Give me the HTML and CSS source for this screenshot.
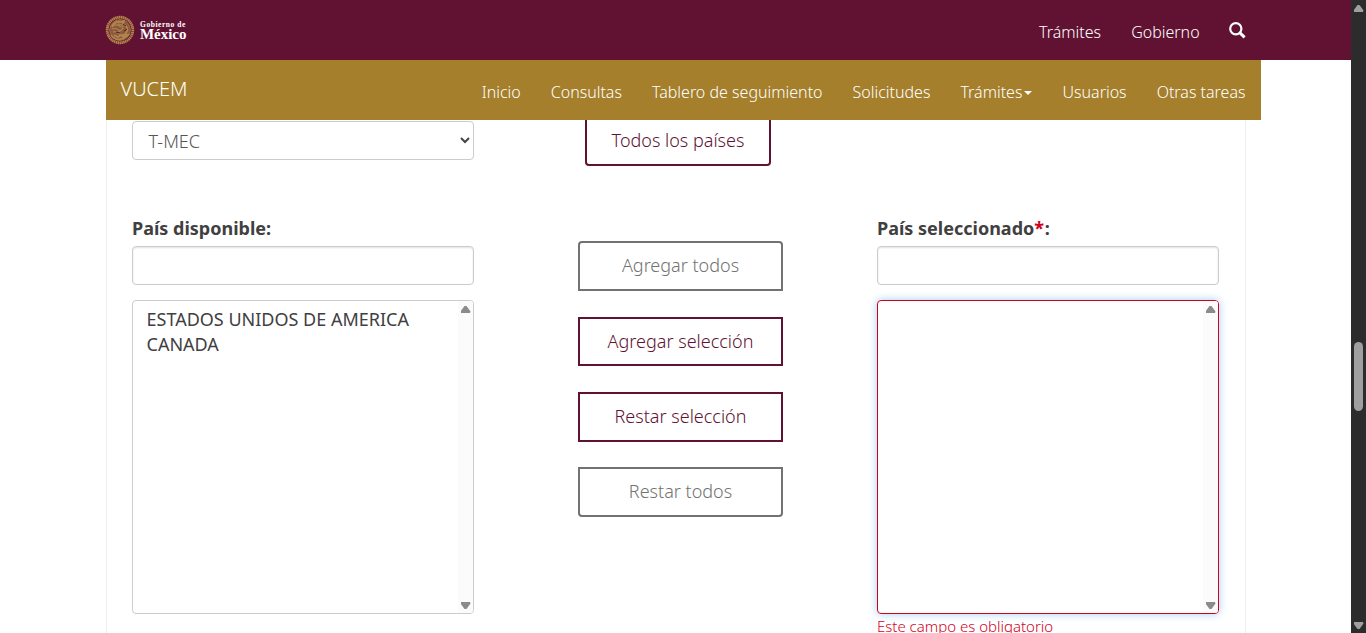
FILE: index.html
```html
<!DOCTYPE html>
<html lang="es">
<head>
<meta charset="utf-8">
<title>VUCEM</title>
<link rel="stylesheet" href="styles.css">
</head>
<body>
<div class="page">
  <header class="gov-bar">
    <a class="gov-logo">
      <svg class="seal" viewBox="0 0 30 30" width="30" height="30" fill="none" stroke="#b2864b">
        <circle cx="15" cy="15" r="12.8" stroke-width="2.8" stroke-dasharray="1.5 .4"/>
        <circle cx="15" cy="15" r="10.4" fill="#8a5940" stroke-width=".7"/>
        <path d="M7 12c1-4 5-6 9-5l3-1-1 3c3 1 5 4 4 7-1 4-5 5-8 4" stroke-width="1.8"/>
        <path d="M8 11c3-2 6-1 8 1M7 14c3-1 6 0 8 2M8 17c3-1 5 0 7 2M13 9c3 0 5 2 5 5M18 13c-1 3-4 3-6 5" stroke-width="1.1"/>
        <path d="M6 20c3 4 7 5 10 4s6-2 8-5M9 20l4 2 3-2 3 2 3-3" stroke-width="1.6"/>
        <path d="M18 9l3 2M19 16l3-2M11 17l4 1" stroke="#611232" stroke-width="1"/>
      </svg>
      <span class="gov-name"><small>Gobierno de</small><strong>México</strong></span>
    </a>
    <nav class="gov-links">
      <a>Trámites</a><a>Gobierno</a>
      <svg class="search" viewBox="0 0 17 17" width="17" height="17" fill="none" stroke="#fff"><circle cx="6.8" cy="6.7" r="5.6" stroke-width="2.2"/><path d="M10.7 10.6l4.9 4.8" stroke-width="2.9"/></svg>
    </nav>
  </header>
  <div class="app-bar">
    <a class="brand">VUCEM</a>
    <nav class="app-links">
      <a>Inicio</a><a>Consultas</a><a>Tablero de seguimiento</a><a>Solicitudes</a><a>Trámites<i class="caret"></i></a><a>Usuarios</a><a>Otras tareas</a>
    </nav>
  </div>
  <main class="content">
    <div class="columns treaty-row">
      <div class="field select"><span>T-MEC</span><svg width="10" height="7" viewBox="0 0 10 7" fill="none" stroke="#444" stroke-width="2"><path d="M1 1l4 4 4-4"/></svg></div>
      <div class="middle"><button class="btn all-countries">Todos los países</button></div>
    </div>
    <div class="columns">
      <section class="picker">
        <label class="label">País disponible:</label>
        <div class="field"></div>
        <div class="list">
          <ul class="options"><li>ESTADOS UNIDOS DE AMERICA</li><li>CANADA</li></ul>
          <div class="track"><i class="arrow up"></i><i class="arrow down"></i></div>
        </div>
      </section>
      <div class="middle actions">
        <button class="btn first disabled">Agregar todos</button>
        <button class="btn add">Agregar selección</button>
        <button class="btn">Restar selección</button>
        <button class="btn last disabled">Restar todos</button>
      </div>
      <section class="picker">
        <label class="label">País seleccionado<span class="required">*</span>:</label>
        <div class="field"></div>
        <div class="list invalid">
          <ul class="options"></ul>
          <div class="track"><i class="arrow up"></i><i class="arrow down"></i></div>
        </div>
        <p class="error">Este campo es obligatorio</p>
      </section>
    </div>
  </main>
</div>
<aside class="page-scroll"><i class="arrow up"></i><i class="thumb"></i><i class="arrow down"></i></aside>
</body>
</html>
```
FILE: styles.css
```css
* { box-sizing: border-box; }
body {
  margin: 0;
  height: 633px;
  display: flex;
  overflow: hidden;
  background: #fff;
  color: #404041;
  font: 300 18px/25px "Noto Sans", sans-serif;
}
.page { width: 1351px; height: 633px; overflow: hidden; display: flex; flex-direction: column; }
.gov-bar {
  height: 60px;
  flex: none;
  padding: 0 105px 0 105px;
  display: flex;
  justify-content: space-between;
  align-items: center;
  background: #611232;
  color: #fff;
}
.gov-logo { display: flex; align-items: center; gap: 5px; }
.gov-name { display: flex; flex-direction: column; font-family: "Liberation Serif", serif; padding-bottom: 2px; }
.gov-name small { font-size: 7.5px; line-height: 9px; letter-spacing: .55px; font-weight: 700; }
.gov-name strong { font-size: 15px; line-height: 10px; letter-spacing: -.05px; font-weight: 700; }
.gov-links { display: flex; gap: 30px; font-size: 16px; padding-top: 4px; }
.search { margin: 2px 0 0 -.6px; }
.app-bar {
  width: 1155px;
  height: 60px;
  flex: none;
  margin-left: 106px;
  padding: 4px 15.5px 0 14.5px;
  display: flex;
  justify-content: space-between;
  align-items: center;
  background: #a57f2c;
  color: #fff;
}
.brand { font-size: 20px; padding-bottom: 8px; }
.app-links { display: flex; gap: 30px; font-size: 16px; }
.caret { display: inline-block; margin-left: 2px; vertical-align: middle; border: 4px solid transparent; border-top-color: #fff; border-bottom: 0; }
.content {
  flex: 1;
  width: 1140px;
  margin-left: 106px;
  padding-left: 25px;
  border: solid #eee;
  border-width: 0 1px;
  overflow: hidden;
}
.columns { display: grid; grid-template-columns: 342px 403px 342px; align-items: start; }
.treaty-row { height: 96px; padding-top: 1px; }
.middle { padding-left: 104px; }
.field {
  height: 39px;
  border: 1px solid #ccc;
  border-radius: 4px;
  box-shadow: inset 0 1px 2px rgba(0, 0, 0, .12);
}
.select { display: flex; align-items: center; justify-content: space-between; padding: 0 3px 0 15.5px; color: #555; box-shadow: none; }
.select span { padding-top: 2px; }
.label { display: block; height: 30px; font-weight: 700; line-height: 25px; }
.required { color: #d0021b; margin-right: .6px; }
.list { height: 314px; margin-top: 15px; border: 1px solid #ccc; border-radius: 4px; display: flex; overflow: hidden; }
.list.invalid { border-color: #d0021b; box-shadow: 0 0 8px rgba(102, 175, 233, .6); }
.options { flex: 1; margin: 0; padding: 6px 0 0 13.5px; list-style: none; font-weight: 400; }
.track { width: 15px; padding: 5px 0 4px; display: flex; flex-direction: column; justify-content: space-between; align-items: center; background: #fbfbfb; }
.arrow { width: 10px; height: 7px; background: #8b8b8b; }
.up { clip-path: polygon(40% 0, 60% 0, 100% 80%, 95% 100%, 5% 100%, 0 80%); }
.down { clip-path: polygon(5% 0, 95% 0, 100% 20%, 60% 100%, 40% 100%, 0 20%); }
.actions { padding-top: 25px; display: flex; flex-direction: column; gap: 26px; }
.btn {
  display: block;
  width: 205px;
  height: 50px;
  padding: 0 0 2px;
  border: 2px solid #611232;
  background: #fff;
  color: #611232;
  font: inherit;
}
.btn.add { height: 49px; padding: 0; }
.btn.disabled { color: #727272; border-color: #727272; }
.btn.first { border-radius: 4px 4px 0 0; }
.btn.last { border-radius: 0 0 4px 4px; margin-top: -1px; }
.all-countries { width: 186px; margin: -5px 0 0 7px; border-radius: 4px; }
.error { margin: 2px 0 0; color: #d0021b; font-size: 15px; line-height: 20px; }
.page-scroll { width: 15px; padding: 5px 0 4px; display: flex; flex-direction: column; align-items: center; background: #2c2c2c; }
.page-scroll .arrow { background: #9f9f9f; }
.thumb { width: 9px; height: 69px; margin: 330px 0 auto; border-radius: 5px; background: #9f9f9f; }
```
